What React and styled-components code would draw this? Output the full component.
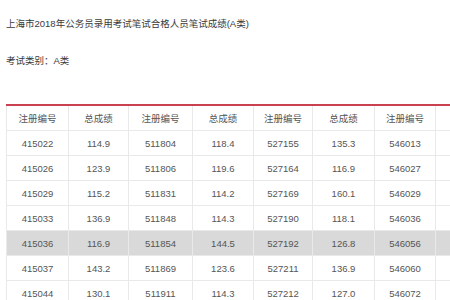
import React from "react";
import styled, { createGlobalStyle } from "styled-components";

const Global = createGlobalStyle`
  html, body { margin: 0; padding: 0; background: #fff; overflow: hidden; }
  body { font-family: "Liberation Sans", "Noto Sans CJK SC", sans-serif; }
`;

const Page = styled.div`
  width: 450px;
  height: 300px;
  overflow: hidden;
  padding: 0 0 0 6px;
  box-sizing: border-box;
`;

const Title = styled.div`
  margin-top: 15px;
  font-size: 9.5px;
  line-height: 18px;
  color: #3a3a3a;
  white-space: nowrap;
`;

const Category = styled.div`
  margin-top: 19px;
  font-size: 9.5px;
  line-height: 18px;
  color: #3a3a3a;
`;

const Table = styled.table`
  margin-top: 34px;
  border-collapse: collapse;
  table-layout: fixed;
  width: 490px;
  border-top: 2px solid #c9404e;
  font-size: 9.5px;
  color: #555;
`;

const Cell = styled.td`
  height: 24px;
  padding: 0;
  text-align: center;
  border: 1px solid #e9e9e9;
  border-top: none;
  white-space: nowrap;
  background: ${(p) => (p.$shade ? "#d9d9d9" : "transparent")};
`;

const Head = styled(Cell).attrs({ as: "th" })`
  font-weight: normal;
  color: #555;
`;

const widths = [62, 60, 64, 61, 59, 62, 61, 61];
const headers = ["注册编号", "总成绩", "注册编号", "总成绩", "注册编号", "总成绩", "注册编号", "总成绩"];
const rows = [
  ["415022", "114.9", "511804", "118.4", "527155", "135.3", "546013", "121.7"],
  ["415026", "123.9", "511806", "119.6", "527164", "116.9", "546027", "118.2"],
  ["415029", "115.2", "511831", "114.2", "527169", "160.1", "546029", "125.4"],
  ["415033", "136.9", "511848", "114.3", "527190", "118.1", "546036", "130.6"],
  ["415036", "116.9", "511854", "144.5", "527192", "126.8", "546056", "119.3"],
  ["415037", "143.2", "511869", "123.6", "527211", "136.9", "546060", "127.5"],
  ["415044", "130.1", "511911", "114.3", "527212", "127.0", "546072", "115.8"],
];

export default function App() {
  return (
    <Page>
      <Global />
      <Title>上海市2018年公务员录用考试笔试合格人员笔试成绩(A类)</Title>
      <Category>考试类别：A类</Category>
      <Table>
        <colgroup>
          {widths.map((w, i) => (
            <col key={i} style={{ width: w }} />
          ))}
        </colgroup>
        <thead>
          <tr>
            {headers.map((h, i) => (
              <Head key={i}>{h}</Head>
            ))}
          </tr>
        </thead>
        <tbody>
          {rows.map((r, ri) => (
            <tr key={ri}>
              {r.map((c, ci) => (
                <Cell key={ci} $shade={ri === 4}>{c}</Cell>
              ))}
            </tr>
          ))}
        </tbody>
      </Table>
    </Page>
  );
}
